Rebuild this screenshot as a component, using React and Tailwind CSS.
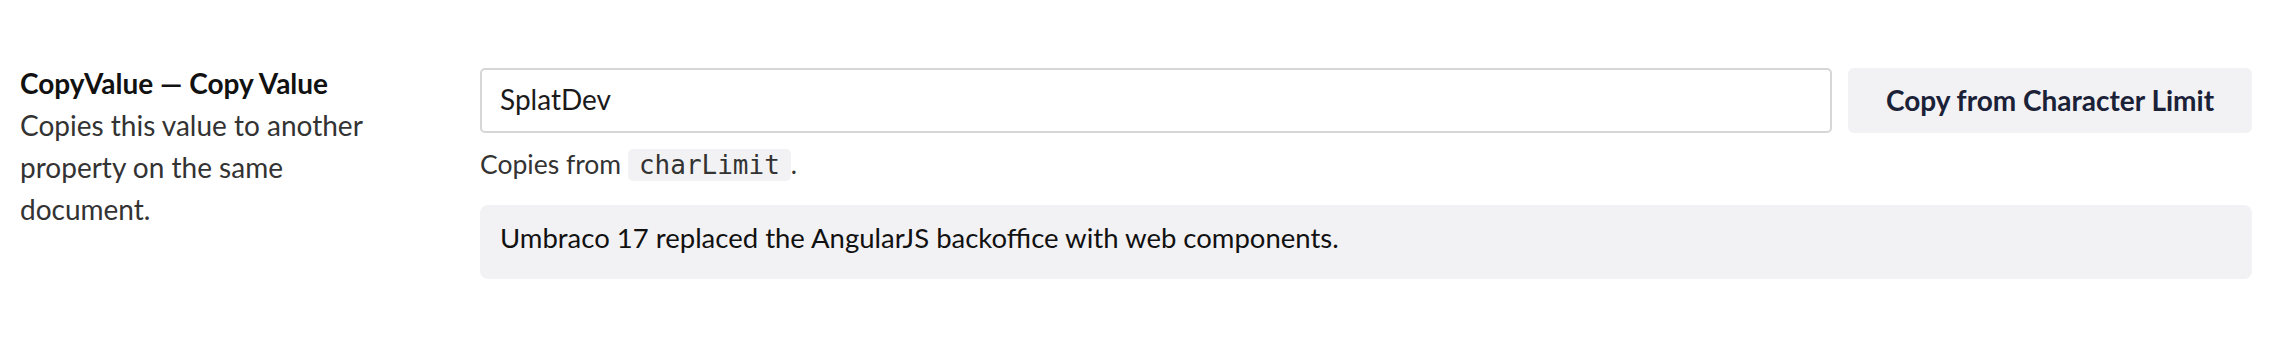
export default function App() {
  return (
    <div className="min-h-screen bg-white font-['Lato','Liberation_Sans',sans-serif] flex items-start px-5 py-[62px]">
      {/* Label column */}
      <div className="w-[370px] shrink-0 mr-[90px] text-[28px] leading-[42px]">
        <div className="font-bold text-[#111111]">CopyValue — Copy Value</div>
        <div className="text-[#333333]">Copies this value to another property on the same document.</div>
      </div>

      {/* Field column */}
      <div className="flex-1 min-w-0 pt-[6px]">
        <div className="flex gap-4">
          <input
            type="text"
            defaultValue="SplatDev"
            className="flex-1 min-w-0 h-[65px] rounded-[5px] border-2 border-[#d6d6d6] bg-white px-[18px] pb-[3px] text-[28px] text-[#1a1a1a] outline-none"
          />
          <button
            type="button"
            className="w-[404px] h-[65px] rounded-[6px] bg-[#f2f2f4] pb-[2px] text-[28px] font-bold text-[#1b2137]"
          >
            Copy from Character Limit
          </button>
        </div>

        <p className="mt-[11px] text-[26.5px] leading-[41px] text-[#333333]">
          Copies from{" "}
          <code className="rounded-[5px] bg-[#f2f2f4] px-[11px] py-[1px] font-['DejaVu_Sans_Mono',monospace] text-[26px] text-[#333333]">
            charLimit
          </code>
          .
        </p>

        <div className="mt-[19px] h-[74px] flex items-center rounded-lg bg-[#f2f2f4] px-5 pb-[8px] text-[27.5px] text-[#111111]">
          Umbraco 17 replaced the AngularJS backoffice with web components.
        </div>
      </div>
    </div>
  );
}
